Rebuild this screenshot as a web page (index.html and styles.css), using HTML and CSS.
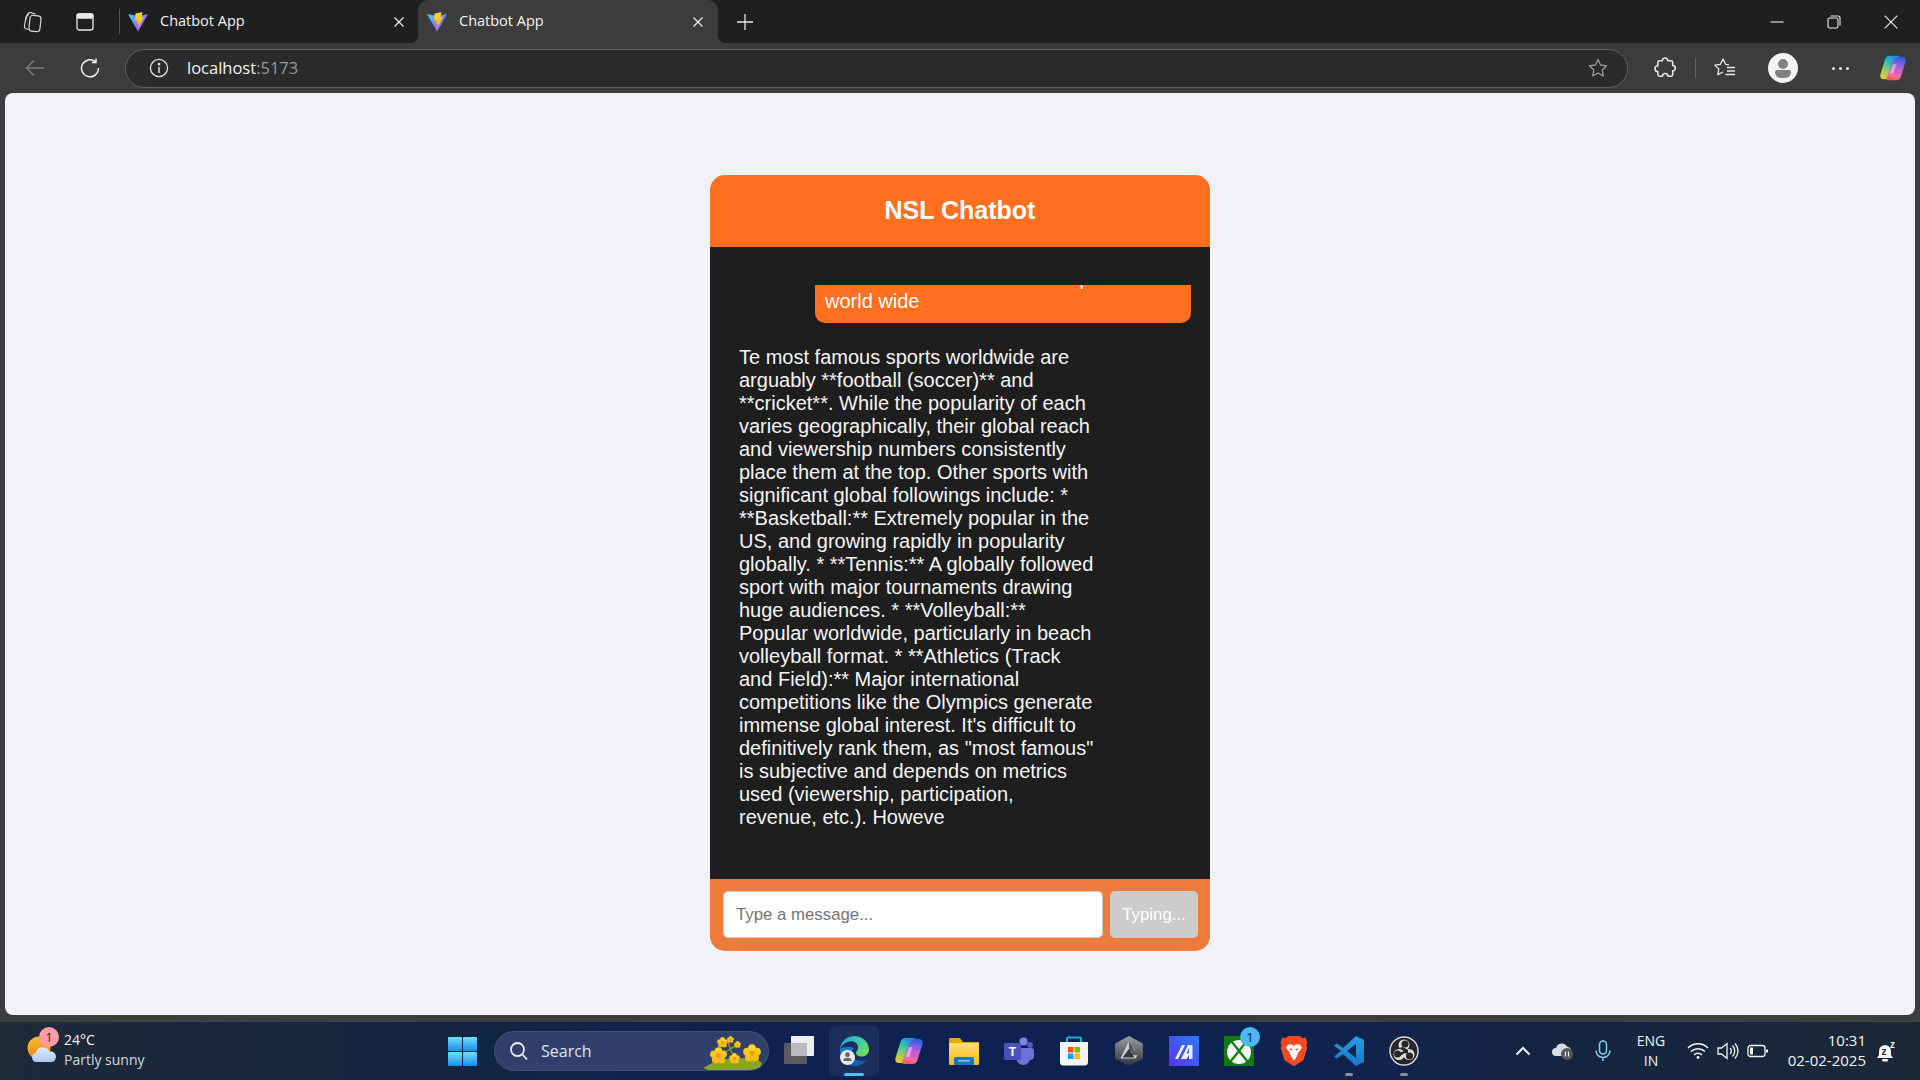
FILE: index.html
```html
<!DOCTYPE html>
<html lang="en">
<head>
    <meta charset="UTF-8">
    <meta name="viewport" content="width=device-width, initial-scale=1.0">
    <title>Chatbot App</title>
    <link rel="stylesheet" href="styles.css">
</head>
<body>
    <svg class="defs" width="0" height="0">
        <defs>
            <linearGradient id="viteBlue" x1="0" y1="0" x2="1" y2="1"><stop offset="0" stop-color="#41d1ff"/><stop offset="1" stop-color="#bd34fe"/></linearGradient>
            <linearGradient id="viteBolt" x1="0" y1="0" x2="0" y2="1"><stop offset="0" stop-color="#ffdd35"/><stop offset="1" stop-color="#ffa800"/></linearGradient>
            <linearGradient id="copilotA" x1=".7" y1="0" x2=".2" y2="1"><stop offset="0" stop-color="#1f8cf0"/><stop offset=".4" stop-color="#38c8a0"/><stop offset=".75" stop-color="#a8d048"/><stop offset="1" stop-color="#f6c53a"/></linearGradient>
            <linearGradient id="copilotB" x1=".6" y1="0" x2=".4" y2="1"><stop offset="0" stop-color="#2a5fe0"/><stop offset=".45" stop-color="#b45fe0"/><stop offset=".85" stop-color="#f06aa0"/><stop offset="1" stop-color="#f2603c"/></linearGradient>
            <linearGradient id="edgeA" x1="0" y1="0" x2="1" y2=".6"><stop offset="0" stop-color="#1f9fd8"/><stop offset=".6" stop-color="#3cc8b0"/><stop offset="1" stop-color="#6fdc60"/></linearGradient>
            <linearGradient id="edgeB" x1="0" y1="0" x2="1" y2="1"><stop offset="0" stop-color="#1b86d0"/><stop offset="1" stop-color="#0f4fa8"/></linearGradient>
            <linearGradient id="winTile" x1="0" y1="0" x2="0" y2="1"><stop offset="0" stop-color="#6fe0fb"/><stop offset="1" stop-color="#1490ee"/></linearGradient>
            <linearGradient id="folder" x1="0" y1="0" x2="0" y2="1"><stop offset="0" stop-color="#ffe06c"/><stop offset="1" stop-color="#f8b818"/></linearGradient>
            <linearGradient id="mApp" x1="0" y1="1" x2="1" y2="0"><stop offset="0" stop-color="#5a34e8"/><stop offset="1" stop-color="#2a7cf8"/></linearGradient>
            <linearGradient id="hexFill" x1="0" y1="0" x2="0" y2="1"><stop offset="0" stop-color="#9a9ea4"/><stop offset="1" stop-color="#30333a"/></linearGradient>
            <linearGradient id="sun" x1="0" y1="0" x2="0" y2="1"><stop offset="0" stop-color="#fbc02d"/><stop offset="1" stop-color="#ef7c10"/></linearGradient>
            <linearGradient id="cloud" x1="0" y1="0" x2="0" y2="1"><stop offset="0" stop-color="#e4eefb"/><stop offset="1" stop-color="#a8c8f0"/></linearGradient>
            <linearGradient id="vsBlue" x1="0" y1="0" x2="0" y2="1"><stop offset="0" stop-color="#2a9ce0"/><stop offset="1" stop-color="#1678c8"/></linearGradient>
            <symbol id="vite" viewBox="0 0 410 404">
                <path d="M399.641 59.525L215.643 388.545C211.844 395.338 202.084 395.378 198.228 388.618L10.582 59.556C6.381 52.19 12.68 43.266 21.028 44.76L205.223 77.682C206.398 77.892 207.601 77.89 208.776 77.676L389.119 44.806C397.439 43.289 403.768 52.143 399.641 59.525Z" fill="url(#viteBlue)"/>
                <path d="M292.965 1.574L156.801 28.255C154.563 28.694 152.906 30.59 152.771 32.866L144.395 174.33C144.198 177.662 147.258 180.248 150.51 179.498L188.42 170.749C191.967 169.931 195.172 173.055 194.443 176.622L183.18 231.775C182.422 235.487 185.907 238.661 189.532 237.56L212.947 230.446C216.577 229.344 220.065 232.527 219.297 236.242L201.398 322.875C200.278 328.294 207.486 331.249 210.492 326.603L212.5 323.5L323.454 102.072C325.312 98.365 322.108 94.137 318.036 94.923L279.014 102.454C275.347 103.161 272.227 99.746 273.262 96.158L298.731 7.867C299.767 4.273 296.636 .855 292.965 1.574Z" fill="url(#viteBolt)"/>
            </symbol>
            <symbol id="copilot" viewBox="0 0 30 30">
                <path d="M11 2h9c1.500 0 2.200 1.300 1.700 2.800L15 22c-1 3-3 5-6 5H5C2 27 .8 24.500 1.500 22L6.500 6C7.200 3.600 9 2 11 2Z" fill="url(#copilotA)"/>
                <path d="M19 28h-9c-1.500 0-2.200-1.300-1.700-2.800L15 8c1-3 3-5 6-5h4c3 0 4.200 2.500 3.500 5L23.500 24c-.7 2.400-2.500 4-4.500 4Z" fill="url(#copilotB)"/>
                <path d="M15 11h3.500L15 21h-3.500Z" fill="#fff" opacity=".45"/>
            </symbol>
            <symbol id="flower" viewBox="0 0 20 20">
                <circle cx="10" cy="4.500" r="4.300" fill="#fbd52e"/>
                <circle cx="15.500" cy="8.500" r="4.300" fill="#fcc820"/>
                <circle cx="13.500" cy="15" r="4.300" fill="#f9bd18"/>
                <circle cx="6.500" cy="15" r="4.300" fill="#f9bd18"/>
                <circle cx="4.500" cy="8.500" r="4.300" fill="#fcc820"/>
                <circle cx="10" cy="10" r="2.800" fill="#f39a10"/>
            </symbol>
        </defs>
    </svg>

    <div class="tabstrip">
        <div class="strip-btn">
            <svg width="22" height="24" viewBox="0 0 22 24" fill="none" stroke="#d8d8d8" stroke-width="1.200"><rect x="8.500" y="5.500" width="11" height="16" rx="3" transform="rotate(6 14 13)"/><path d="M8 19.500 5.500 19c-1.500-.4-2.300-1.700-2-3L5 7c.3-1.500 1.500-2.400 3-2.200"/><path d="M4.500 10 6.500 4.500c.5-1.400 1.800-2.200 3.200-1.800l4.800 1.300"/></svg>
        </div>
        <div class="strip-btn">
            <svg width="20" height="20" viewBox="0 0 20 20" fill="none" stroke="#e8e8e8" stroke-width="1.300"><rect x="2" y="2" width="16" height="16" rx="2.500"/><rect x="2" y="2" width="16" height="4" rx="1.500" fill="#e8e8e8"/></svg>
        </div>
        <span class="strip-sep"></span>
        <div class="tab">
            <svg class="favicon"><use href="#vite"/></svg>
            <span class="tab-title">Chatbot App</span>
            <svg class="tab-close" viewBox="0 0 12 12" stroke="#f0f0f0" stroke-width="1.200"><path d="M1.500 1.500 10.500 10.500M10.500 1.500 1.500 10.500"/></svg>
        </div>
        <div class="tab tab-active">
            <svg class="favicon"><use href="#vite"/></svg>
            <span class="tab-title">Chatbot App</span>
            <svg class="tab-close" viewBox="0 0 12 12" stroke="#f0f0f0" stroke-width="1.200"><path d="M1.500 1.500 10.500 10.500M10.500 1.500 1.500 10.500"/></svg>
        </div>
        <svg class="new-tab" viewBox="0 0 18 18" stroke="#e8e8e8" stroke-width="1.300"><path d="M9 1v16M1 9h16"/></svg>
        <div class="window-btns">
            <svg viewBox="0 0 14 14" stroke="#f0f0f0" stroke-width="1.100" fill="none"><path d="M.5 7h13"/></svg>
            <svg viewBox="0 0 14 14" stroke="#f0f0f0" stroke-width="1.100" fill="none"><rect x="1" y="3" width="10" height="10" rx="1.800"/><path d="M3.500 1h7.500a2 2 0 0 1 2 2v7.500"/></svg>
            <svg viewBox="0 0 14 14" stroke="#f0f0f0" stroke-width="1.100" fill="none"><path d="M.7.700 13.300 13.300M13.300.700 .7 13.300"/></svg>
        </div>
    </div>

    <div class="toolbar">
        <svg class="tool-back" viewBox="0 0 20 20" fill="none" stroke="#7c7c7c" stroke-width="1.400"><path d="M19 10H1.500M9 2.500 1.500 10 9 17.500"/></svg>
        <svg class="tool-reload" viewBox="0 0 20 20" fill="none" stroke="#f0f0f0" stroke-width="1.500"><path d="M15.500 3.800A8.500 8.500 0 1 0 18.500 10M16 .5v4h-4"/></svg>
        <div class="address">
            <svg class="info" viewBox="0 0 20 20" fill="none" stroke="#e4e4e4" stroke-width="1.300"><circle cx="10" cy="10" r="8.600"/><path d="M10 9v6" stroke-width="1.500"/><circle cx="10" cy="6.200" r=".7"/></svg>
            <span class="url">localhost<span class="url-port">:5173</span></span>
            <svg class="addr-star" viewBox="0 0 20 20" fill="none" stroke="#9a9a9a" stroke-width="1.300" stroke-linejoin="round"><path d="M10 1.500 12.600 7l6 .8-4.400 4.100 1.100 6L10 15l-5.300 2.900 1.100-6L1.400 7.800l6-.8Z"/></svg>
        </div>
        <div class="tool-right">
            <svg class="ext" viewBox="0 0 20 20" fill="none" stroke="#e8e8e8" stroke-width="1.400" stroke-linejoin="round"><path d="M7.500 3.500a2.500 2.500 0 0 1 5 0h3a1.500 1.500 0 0 1 1.500 1.500v2.800a2.400 2.400 0 0 1 0 4.800V16a1.500 1.500 0 0 1-1.500 1.500h-2.800a2.500 2.500 0 0 0-5 0H5A1.500 1.500 0 0 1 3.500 16v-2.800a2.600 2.600 0 0 1 0-5.200V5A1.500 1.500 0 0 1 5 3.500Z"/></svg>
            <span class="tool-sep"></span>
            <svg class="favs" viewBox="0 0 22 20" fill="none" stroke="#e8e8e8" stroke-width="1.300" stroke-linejoin="round"><path d="M15 6.800 11.600 6.300 9 1 6.400 6.300.8 7.100l4 4-1 5.600 5.200-2.700"/><path d="M13 9.500h8M13 13h8M11.500 16.500H21"/></svg>
            <div class="profile">
                <span class="profile-head"></span>
                <span class="profile-body"></span>
            </div>
            <div class="more"><span></span><span></span><span></span></div>
            <svg class="toolbar-copilot"><use href="#copilot"/></svg>
        </div>
    </div>

    <main class="page">
        <div class="chat">
            <h1 class="chat-header">NSL Chatbot</h1>
            <div class="chat-body">
                <div class="messages">
                    <div class="msg msg-user">which are the most famous sports<br>world wide</div>
                    <div class="msg msg-bot">Te most famous sports worldwide are arguably **football (soccer)** and **cricket**. While the popularity of each varies geographically, their global reach and viewership numbers consistently place them at the top. Other sports with significant global followings include: * **Basketball:** Extremely popular in the US, and growing rapidly in popularity globally. * **Tennis:** A globally followed sport with major tournaments drawing huge audiences. * **Volleyball:** Popular worldwide, particularly in beach volleyball format. * **Athletics (Track and Field):** Major international competitions like the Olympics generate immense global interest. It's difficult to definitively rank them, as "most famous" is subjective and depends on metrics used (viewership, participation, revenue, etc.). Howeve</div>
                </div>
            </div>
            <div class="chat-input">
                <input class="chat-field" type="text" placeholder="Type a message...">
                <button class="chat-send" disabled>Typing...</button>
            </div>
        </div>
    </main>

    <footer class="taskbar">
        <div class="weather">
            <div class="weather-icon">
                <svg viewBox="0 0 30 30" width="30" height="30">
                    <circle cx="12" cy="12" r="11.500" fill="url(#sun)"/>
                    <path d="M6.500 27a4.500 4.500 0 0 1-.8-8.900 7 7 0 0 1 13.300-1.600 5.300 5.300 0 0 1 3 10.500Z" fill="url(#cloud)" transform="translate(3 -1)"/>
                </svg>
                <span class="weather-badge">1</span>
            </div>
            <div class="weather-text">
                <span class="weather-temp">24°C</span>
                <span class="weather-desc">Partly sunny</span>
            </div>
        </div>

        <div class="task-center">
            <svg class="win-logo" viewBox="0 0 29 29">
                <rect width="14" height="14" rx="1" fill="url(#winTile)"/><rect x="15" width="14" height="14" rx="1" fill="url(#winTile)"/>
                <rect y="15" width="14" height="14" rx="1" fill="url(#winTile)"/><rect x="15" y="15" width="14" height="14" rx="1" fill="url(#winTile)"/>
            </svg>
            <div class="search">
                <svg viewBox="0 0 20 20" width="20" height="20" fill="none" stroke="#e8ecf4" stroke-width="1.800"><circle cx="8.500" cy="8.500" r="6.500"/><path d="M13.500 13.500 18 18.500"/></svg>
                <span class="search-label">Search</span>
                <svg class="search-art" viewBox="0 0 62 36" width="62" height="36">
                    <path d="M1 34 12 28Q30 22 48 25 60 26 60 30 58 36 44 36H6Z" fill="#8aa62a"/>
                    <path d="M16 24 28 15 36 10M28 15 33 24M28 15 26 6" fill="none" stroke="#7f9a2a" stroke-width="1.500"/>
                    <use href="#flower" x="8" y="13" width="17" height="17"/>
                    <use href="#flower" x="15" y="3" width="11" height="11"/>
                    <use href="#flower" x="27" y="19" width="11" height="11"/>
                    <use href="#flower" x="25" y="1" width="7" height="9"/>
                    <use href="#flower" x="32" y="7" width="7" height="7"/>
                    <use href="#flower" x="41" y="10" width="18" height="18"/>
                </svg>
            </div>
            <div class="task-icons">
                <div class="task-item">
                    <svg viewBox="0 0 30 30"><rect y="7" width="23" height="21" rx="1" fill="#5a5c62"/><rect x="7" y="0" width="23" height="20" rx="1" fill="#eceef2"/><rect x="7" y="7" width="16" height="13" fill="#b8babe"/></svg>
                </div>
                <div class="task-item task-active">
                    <svg viewBox="0 0 30 30"><path d="M1 13C2 5 8 0 15.500 0 24 0 30 6.500 30 13.500c0 4.500-3.500 7-7.500 7-3 0-5.500-1.300-5.500-3.500 0-2 2-2.500 2-5.500C19 7 15 4.500 10.500 5.500 5.500 6.500 2.500 10 1 13Z" fill="url(#edgeA)"/><path d="M1 13c-.5 9 6 17 15 17 5 0 9.500-2.300 12.500-6.500-3.500 1.500-11 2.500-14-2-2-3-1.500-7 .5-9.500C10 10 3 11 1 13Z" fill="url(#edgeB)"/><circle cx="8.500" cy="21.500" r="7.500" fill="#ececec"/><circle cx="8.500" cy="18.700" r="2.400" fill="#666"/><path d="M4.300 25a4.200 3.200 0 0 1 8.400 0Z" fill="#666"/></svg>
                    <span class="run-dot run-dot-on"></span>
                </div>
                <div class="task-item"><svg viewBox="0 0 30 30"><use href="#copilot"/></svg></div>
                <div class="task-item">
                    <svg viewBox="0 0 30 28"><path d="M0 2a1 1 0 0 1 1-1h10l3 4h16v22H0Z" fill="#e2a60c"/><rect y="6" width="30" height="22" rx="1" fill="url(#folder)"/><path d="M5 28v-6a2 2 0 0 1 2-2h16a2 2 0 0 1 2 2v6Z" fill="#1576c8"/><rect x="9" y="23" width="12" height="1.500" fill="#8fcbf5"/></svg>
                </div>
                <div class="task-item">
                    <svg viewBox="0 0 30 28"><circle cx="19.500" cy="4.500" r="4" fill="#7b83eb"/><circle cx="26" cy="8" r="3" fill="#5059c9"/><path d="M12 11h15a3 3 0 0 1 3 3v5c0 2.500-1.500 4-4 4-1 3-4 5-7 5-4 0-7-4-7-8Z" fill="#6a72d8"/><rect y="6" width="17" height="17" rx="2" fill="#4a52b8"/><text class="teams-t" x="8.500" y="19" text-anchor="middle">T</text></svg>
                </div>
                <div class="task-item">
                    <svg viewBox="0 0 30 30"><path d="M8 7V2.500a1 1 0 0 1 1-1h12a1 1 0 0 1 1 1V7" fill="none" stroke="#2aa8e0" stroke-width="2"/><path d="M1 6h28v20a3.500 3.500 0 0 1-3.500 3.500h-21A3.500 3.500 0 0 1 1 26Z" fill="#f4f4f4"/><rect x="9" y="11" width="5.500" height="5.500" fill="#f25022"/><rect x="15.500" y="11" width="5.500" height="5.500" fill="#7fba00"/><rect x="9" y="17.500" width="5.500" height="5.500" fill="#00a4ef"/><rect x="15.500" y="17.500" width="5.500" height="5.500" fill="#ffb900"/></svg>
                </div>
                <div class="task-item">
                    <svg viewBox="0 0 26 28"><path d="M13 0 26 7v14l-13 7L0 21V7Z" fill="url(#hexFill)"/><path d="M13 5 5 21h14l2-3H11l5-3 3-1Z" fill="#d0d2d6"/><path d="M13 5 21 18l-5-3-3-1Z" fill="#55585e"/><path d="M7 20 13 12l5 8Z" fill="#34373c"/></svg>
                </div>
                <div class="task-item">
                    <svg viewBox="0 0 30 30"><rect width="30" height="30" fill="url(#mApp)"/><path d="M6 23 13 9h3L9 23ZM12 23 19 9h4.500v14H20v-4l-2.500 4Z" fill="#eef0ff"/><path d="M20 12v5l-2.500 1Z" fill="url(#mApp)"/></svg>
                </div>
                <div class="task-item">
                    <svg viewBox="0 0 30 30"><rect width="30" height="30" fill="#107c10"/><circle cx="15" cy="16" r="12" fill="#f4f4f4"/><path d="M6 4C11 9 19 21 25 27M24 4C19 9 11 21 5 27" fill="none" stroke="#107c10" stroke-width="2.200"/></svg>
                    <span class="task-badge">1</span>
                </div>
                <div class="task-item">
                    <svg viewBox="0 0 25 28"><path d="M7 0h11l2.500 2 3-.5 1.500 5-1 2.500 1 1.500-3.500 12-7 4.500-2 1-2-1-7-4.500L0 10.500 1 9 0 6.500l1.500-5 3 .5Z" fill="#f14a23"/><path d="M7 8h4l1.500 1.500L14 8h4l2 3-3.500 4.500-1 3L12.500 23l-3-4.500-1-3L5 11Z" fill="#fff"/><path d="M8.500 12l2.500 1M16.500 12 14 13" stroke="#f14a23" stroke-width="1.300"/></svg>
                </div>
                <div class="task-item">
                    <svg viewBox="0 0 30 30"><path fill-rule="evenodd" d="M22 0 30 4v22l-8 4-13-12-6 4.500-3-2L7 15 0 9.500l3-2 6 4.500ZM22 8 13 15l9 7Z" fill="url(#vsBlue)"/></svg>
                    <span class="run-dot"></span>
                </div>
                <div class="task-item">
                    <svg viewBox="0 0 30 30"><circle cx="15" cy="15" r="14" fill="#262626" stroke="#dcdcdc" stroke-width="1.400"/><g fill="#dcdcdc"><circle cx="15" cy="9" r="5.500"/><circle cx="10" cy="18.500" r="5.500"/><circle cx="20" cy="18.500" r="5.500"/></g><g fill="#262626"><circle cx="16" cy="8" r="3.500"/><circle cx="8.500" cy="18" r="3.500"/><circle cx="20.500" cy="20" r="3.500"/><path d="M15 15 10 12l4-1 5 3 0 4-3-1-5 3-1-3Z"/></g></svg>
                    <span class="run-dot"></span>
                </div>
            </div>
        </div>

        <div class="tray">
            <svg class="tray-chevron" viewBox="0 0 16 10" fill="none" stroke="#f0f0f0" stroke-width="2"><path d="M1.500 8.500 8 2l6.500 6.500"/></svg>
            <svg class="tray-cloud" viewBox="0 0 22 18"><path d="M4 14a4 4 0 0 1 0-8 6 6 0 0 1 11-1.500A5 5 0 0 1 19 10v4Z" fill="#d8dce2"/><circle cx="15" cy="12" r="6" fill="#55585e"/><path d="M13.500 9.500v5M16.500 9.500v5" stroke="#eee" stroke-width="1.200"/></svg>
            <svg class="tray-mic" viewBox="0 0 16 22" fill="none" stroke="#7fd4ee" stroke-width="1.500"><rect x="4.500" y="1" width="7" height="13" rx="3.500"/><path d="M1 10.500a7 7 0 0 0 14 0M8 17.500V21"/></svg>
            <div class="tray-lang"><span>ENG</span><span>IN</span></div>
            <svg class="tray-wifi" viewBox="0 0 22 18" fill="none" stroke="#f4f4f4" stroke-width="1.500"><path d="M1 6a14 14 0 0 1 20 0M4 9.500a10 10 0 0 1 14 0M7 13a5.500 5.500 0 0 1 8 0"/><circle cx="11" cy="15.500" r="1.400" fill="#f4f4f4" stroke="none"/></svg>
            <svg class="tray-vol" viewBox="0 0 22 18" fill="none" stroke="#f4f4f4" stroke-width="1.300"><path d="M1 6h3.500L10 1.500v15L4.500 12H1Z"/><path d="M13 6a4 4 0 0 1 0 6M15.500 3.500a8 8 0 0 1 0 11M18 1.500a11 11 0 0 1 0 15"/></svg>
            <svg class="tray-batt" viewBox="0 0 22 14" fill="none" stroke="#f4f4f4" stroke-width="1.300"><rect x="1" y="1.500" width="17" height="11" rx="2.500"/><rect x="3" y="3.500" width="3" height="7" fill="#f4f4f4" stroke="none"/><path d="M20 5.500v3" stroke-width="2"/></svg>
            <div class="tray-clock"><span>10:31</span><span>02-02-2025</span></div>
            <svg class="tray-bell" viewBox="0 0 22 24"><path d="M9 6a6 6 0 0 0-6 6v4l-2 3h16l-2-3v-4a6 6 0 0 0-6-6Z" fill="#f4f4f4"/><rect x="6" y="20" width="6" height="2.500" rx="1.200" fill="#f4f4f4"/><text class="bell-z" x="5.500" y="16">z</text><text class="bell-top" x="14" y="9">z</text></svg>
        </div>
    </footer>
</body>
</html>
```

FILE: styles.css
```css
* {
    margin: 0;
    padding: 0;
    box-sizing: border-box;
}

html, body {
    width: 1920px;
    height: 1080px;
    overflow: hidden;
}

body {
    display: flex;
    flex-direction: column;
    background-color: #3c3c3c;
    font-family: "Liberation Sans", Arial, sans-serif;
}

.defs {
    position: absolute;
}

/* tab strip */
.tabstrip {
    height: 43px;
    flex-shrink: 0;
    display: flex;
    align-items: center;
    background-color: #1f1f1f;
    padding-left: 11px;
}

.strip-btn {
    width: 42px;
    height: 42px;
    margin-right: 11px;
    display: flex;
    align-items: center;
    justify-content: center;
}

.strip-sep {
    width: 1px;
    height: 25px;
    margin-left: 2px;
    background-color: #555;
}

.tab {
    width: 298px;
    height: 43px;
    display: flex;
    align-items: center;
    padding-left: 8px;
    padding-right: 13px;
    color: #f4f4f4;
}

.tab-active {
    position: relative;
    width: 300px;
    background-color: #3c3c3c;
    border-radius: 10px 10px 0 0;
    padding-left: 9px;
    padding-right: 14px;
}

/* little flares at the foot of the active tab */
.tab-active::before,
.tab-active::after {
    content: "";
    position: absolute;
    bottom: 0;
    width: 8px;
    height: 8px;
}

.tab-active::before {
    left: -8px;
    background: radial-gradient(circle at 0 0, transparent 8px, #3c3c3c 8.500px);
}

.tab-active::after {
    right: -8px;
    background: radial-gradient(circle at 100% 0, transparent 8px, #3c3c3c 8.500px);
}

.favicon {
    width: 20px;
    height: 20px;
    flex-shrink: 0;
}

.tab-title {
    flex: 1;
    margin-left: 12px;
    padding-bottom: 2px;
    font-family: "Open Sans", sans-serif;
    font-size: 14.500px;
}

.tab-close {
    width: 12px;
    height: 12px;
}

.new-tab {
    width: 18px;
    height: 18px;
    margin-left: 18px;
}

.window-btns {
    margin-left: auto;
    display: flex;
    gap: 43px;
    padding-right: 22px;
}

.window-btns svg {
    width: 14px;
    height: 14px;
}

/* toolbar */
.toolbar {
    height: 50px;
    flex-shrink: 0;
    display: flex;
    align-items: center;
    padding-left: 25px;
}

.tool-back {
    width: 20px;
    height: 20px;
}

.tool-reload {
    width: 20px;
    height: 20px;
    margin-left: 35px;
}

.address {
    width: 1503px;
    height: 39px;
    flex-shrink: 0;
    margin-left: 25px;
    display: flex;
    align-items: center;
    padding-left: 23px;
    padding-right: 19px;
    background-color: #2b2b2b;
    border: 1px solid #5f5f5f;
    border-radius: 20px;
}

.info {
    width: 20px;
    height: 20px;
}

.url {
    margin-left: 18px;
    padding-bottom: 2px;
    font-family: "Open Sans", sans-serif;
    font-size: 16.500px;
    color: #f4f4f4;
}

.url-port {
    color: #9a9a9a;
}

.addr-star {
    width: 20px;
    height: 20px;
    margin-left: auto;
}

.tool-right {
    display: flex;
    align-items: center;
}

.ext {
    width: 22px;
    height: 22px;
    margin-left: 26px;
}

.tool-sep {
    width: 1px;
    height: 20px;
    margin-left: 19px;
    background-color: #666;
}

.favs {
    width: 22px;
    height: 20px;
    margin-left: 18px;
}

.profile {
    position: relative;
    width: 30px;
    height: 30px;
    margin-left: 32px;
    border-radius: 50%;
    background-color: #f4f4f4;
    overflow: hidden;
}

.profile-head {
    position: absolute;
    top: 6px;
    left: 10px;
    width: 10px;
    height: 10px;
    border-radius: 50%;
    background-color: #808080;
}

.profile-body {
    position: absolute;
    top: 17px;
    left: 7px;
    width: 16px;
    height: 8px;
    border-radius: 3px 3px 8px 8px;
    background-color: #808080;
}

.more {
    display: flex;
    gap: 4px;
    margin-left: 34px;
}

.more span {
    width: 3px;
    height: 3px;
    border-radius: 50%;
    background-color: #e8e8e8;
}

.toolbar-copilot {
    width: 28px;
    height: 28px;
    margin-left: 30px;
}

/* page */
.page {
    height: 922px;
    flex-shrink: 0;
    margin: 0 5px;
    padding-top: 82px;
    display: flex;
    justify-content: center;
    align-items: flex-start;
    background-color: #f0f2f7;
    border-radius: 8px;
}

.chat {
    width: 500px;
    height: 776px;
    display: flex;
    flex-direction: column;
    border-radius: 15px;
    overflow: hidden;
}

.chat-header {
    height: 72px;
    flex-shrink: 0;
    display: flex;
    align-items: center;
    justify-content: center;
    padding-bottom: 1px;
    background-color: #ff6f20;
    color: #fff;
    font-size: 25px;
    font-weight: bold;
}

.chat-body {
    height: 632px;
    flex-shrink: 0;
    padding: 38px 19px 38px;
    background-color: #1e1e1e;
}

.messages {
    height: 100%;
    display: flex;
    flex-direction: column;
    justify-content: flex-end;
    gap: 13px;
    overflow: hidden;
    padding-bottom: 2px;
}

.msg {
    width: 376px;
    flex-shrink: 0;
    padding: 10px;
    font-size: 20px;
    line-height: 23px;
    color: #fff;
    border-radius: 10px;
}

.msg-user {
    align-self: flex-end;
    background-color: #ff6f20;
}

.msg-bot {
    align-self: flex-start;
    color: #f5f5f5;
}

.chat-input {
    height: 72px;
    flex-shrink: 0;
    display: flex;
    gap: 7px;
    padding: 12px 12px 13px 13px;
    background-color: #ee7a3c;
}

.chat-field {
    flex: 1;
    min-width: 0;
    padding: 0 12px;
    border: 1px solid #ccc;
    border-radius: 5px;
    font-family: inherit;
    font-size: 16.800px;
    background-color: #fff;
}

.chat-field::placeholder {
    color: #757575;
}

.chat-send {
    width: 88px;
    border: none;
    border-radius: 5px;
    background-color: #ccc;
    color: #fff;
    font-family: inherit;
    font-size: 16.800px;
}

/* taskbar */
.taskbar {
    position: absolute;
    top: 1021px;
    left: 0;
    width: 1920px;
    height: 59px;
    display: flex;
    align-items: center;
    background: linear-gradient(90deg, #1d2a38 0%, #15263f 20%, #0e2252 40%, #0e2252 65%, #142543 80%, #1b2836 100%);
    border-top: 1px solid #39424e;
    color: #f4f4f4;
    font-family: "Open Sans", sans-serif;
}

.weather {
    width: 448px;
    flex-shrink: 0;
    display: flex;
    align-items: center;
    padding-left: 27px;
    gap: 6px;
}

.weather-icon {
    position: relative;
    width: 31px;
    height: 30px;
}

.weather-badge {
    position: absolute;
    top: -9px;
    right: -1px;
    width: 20px;
    height: 20px;
    border-radius: 50%;
    background-color: #ff9aa6;
    color: #222;
    font-size: 13px;
    line-height: 20px;
    text-align: center;
}

.weather-text {
    display: flex;
    flex-direction: column;
    font-size: 14px;
    line-height: 20px;
    margin-top: -2px;
}

.weather-temp {
    font-size: 14px;
}

.weather-desc {
    color: #d4d8de;
}

.task-center {
    display: flex;
    align-items: center;
}

.win-logo {
    width: 29px;
    height: 29px;
}

.search {
    width: 275px;
    height: 40px;
    margin-left: 17px;
    display: flex;
    align-items: center;
    padding-left: 14px;
    padding-right: 4px;
    background-color: #31406a;
    border: 1px solid #414f78;
    border-radius: 20px;
}

.search-label {
    margin-left: 12px;
    font-size: 16px;
    color: #dfe3ec;
}

.search-art {
    margin-left: auto;
    align-self: flex-end;
}

.task-icons {
    display: flex;
    margin-left: 2px;
}

.task-item {
    position: relative;
    width: 55px;
    height: 50px;
    display: flex;
    align-items: center;
    justify-content: center;
}

.task-item svg {
    width: 30px;
    height: 30px;
}

.task-active {
    background-color: rgba(255, 255, 255, 0.06);
    border-radius: 6px;
    width: 50px;
    margin: 0 2.500px;
}

.run-dot {
    position: absolute;
    bottom: 0;
    left: 50%;
    width: 8px;
    height: 3px;
    margin-left: -4px;
    border-radius: 2px;
    background-color: #8a8f99;
}

.run-dot-on {
    width: 20px;
    margin-left: -10px;
    background-color: #4fc3f7;
}

.task-badge {
    position: absolute;
    top: 1px;
    right: 6px;
    width: 20px;
    height: 20px;
    border-radius: 50%;
    background-color: #4cb8f0;
    color: #12203a;
    font-size: 13px;
    line-height: 20px;
    text-align: center;
}

.teams-t {
    font: bold 12px "Liberation Sans", sans-serif;
    fill: #fff;
}

.bell-z {
    font: bold 10px "Liberation Sans", sans-serif;
    fill: #1b2836;
}

.bell-top {
    font: bold 10px "Liberation Sans", sans-serif;
    fill: #f4f4f4;
}

.tray {
    margin-left: auto;
    display: flex;
    align-items: center;
    padding-right: 22px;
}

.tray-chevron {
    width: 16px;
    height: 10px;
}

.tray-cloud {
    width: 22px;
    height: 18px;
    margin-left: 21px;
}

.tray-mic {
    width: 16px;
    height: 22px;
    margin-left: 21px;
}

.tray-lang {
    width: 50px;
    margin-left: 15px;
    display: flex;
    flex-direction: column;
    align-items: center;
    font-size: 14px;
    line-height: 20px;
}

.tray-wifi {
    width: 22px;
    height: 18px;
    margin-left: 11px;
}

.tray-vol {
    width: 22px;
    height: 18px;
    margin-left: 8px;
}

.tray-batt {
    width: 22px;
    height: 14px;
    margin-left: 8px;
}

.tray-clock {
    width: 85px;
    margin-left: 12px;
    margin-top: -3px;
    display: flex;
    flex-direction: column;
    align-items: flex-end;
    font-size: 15px;
    line-height: 20px;
}

.tray-bell {
    width: 22px;
    height: 24px;
    margin-left: 10px;
}
```
